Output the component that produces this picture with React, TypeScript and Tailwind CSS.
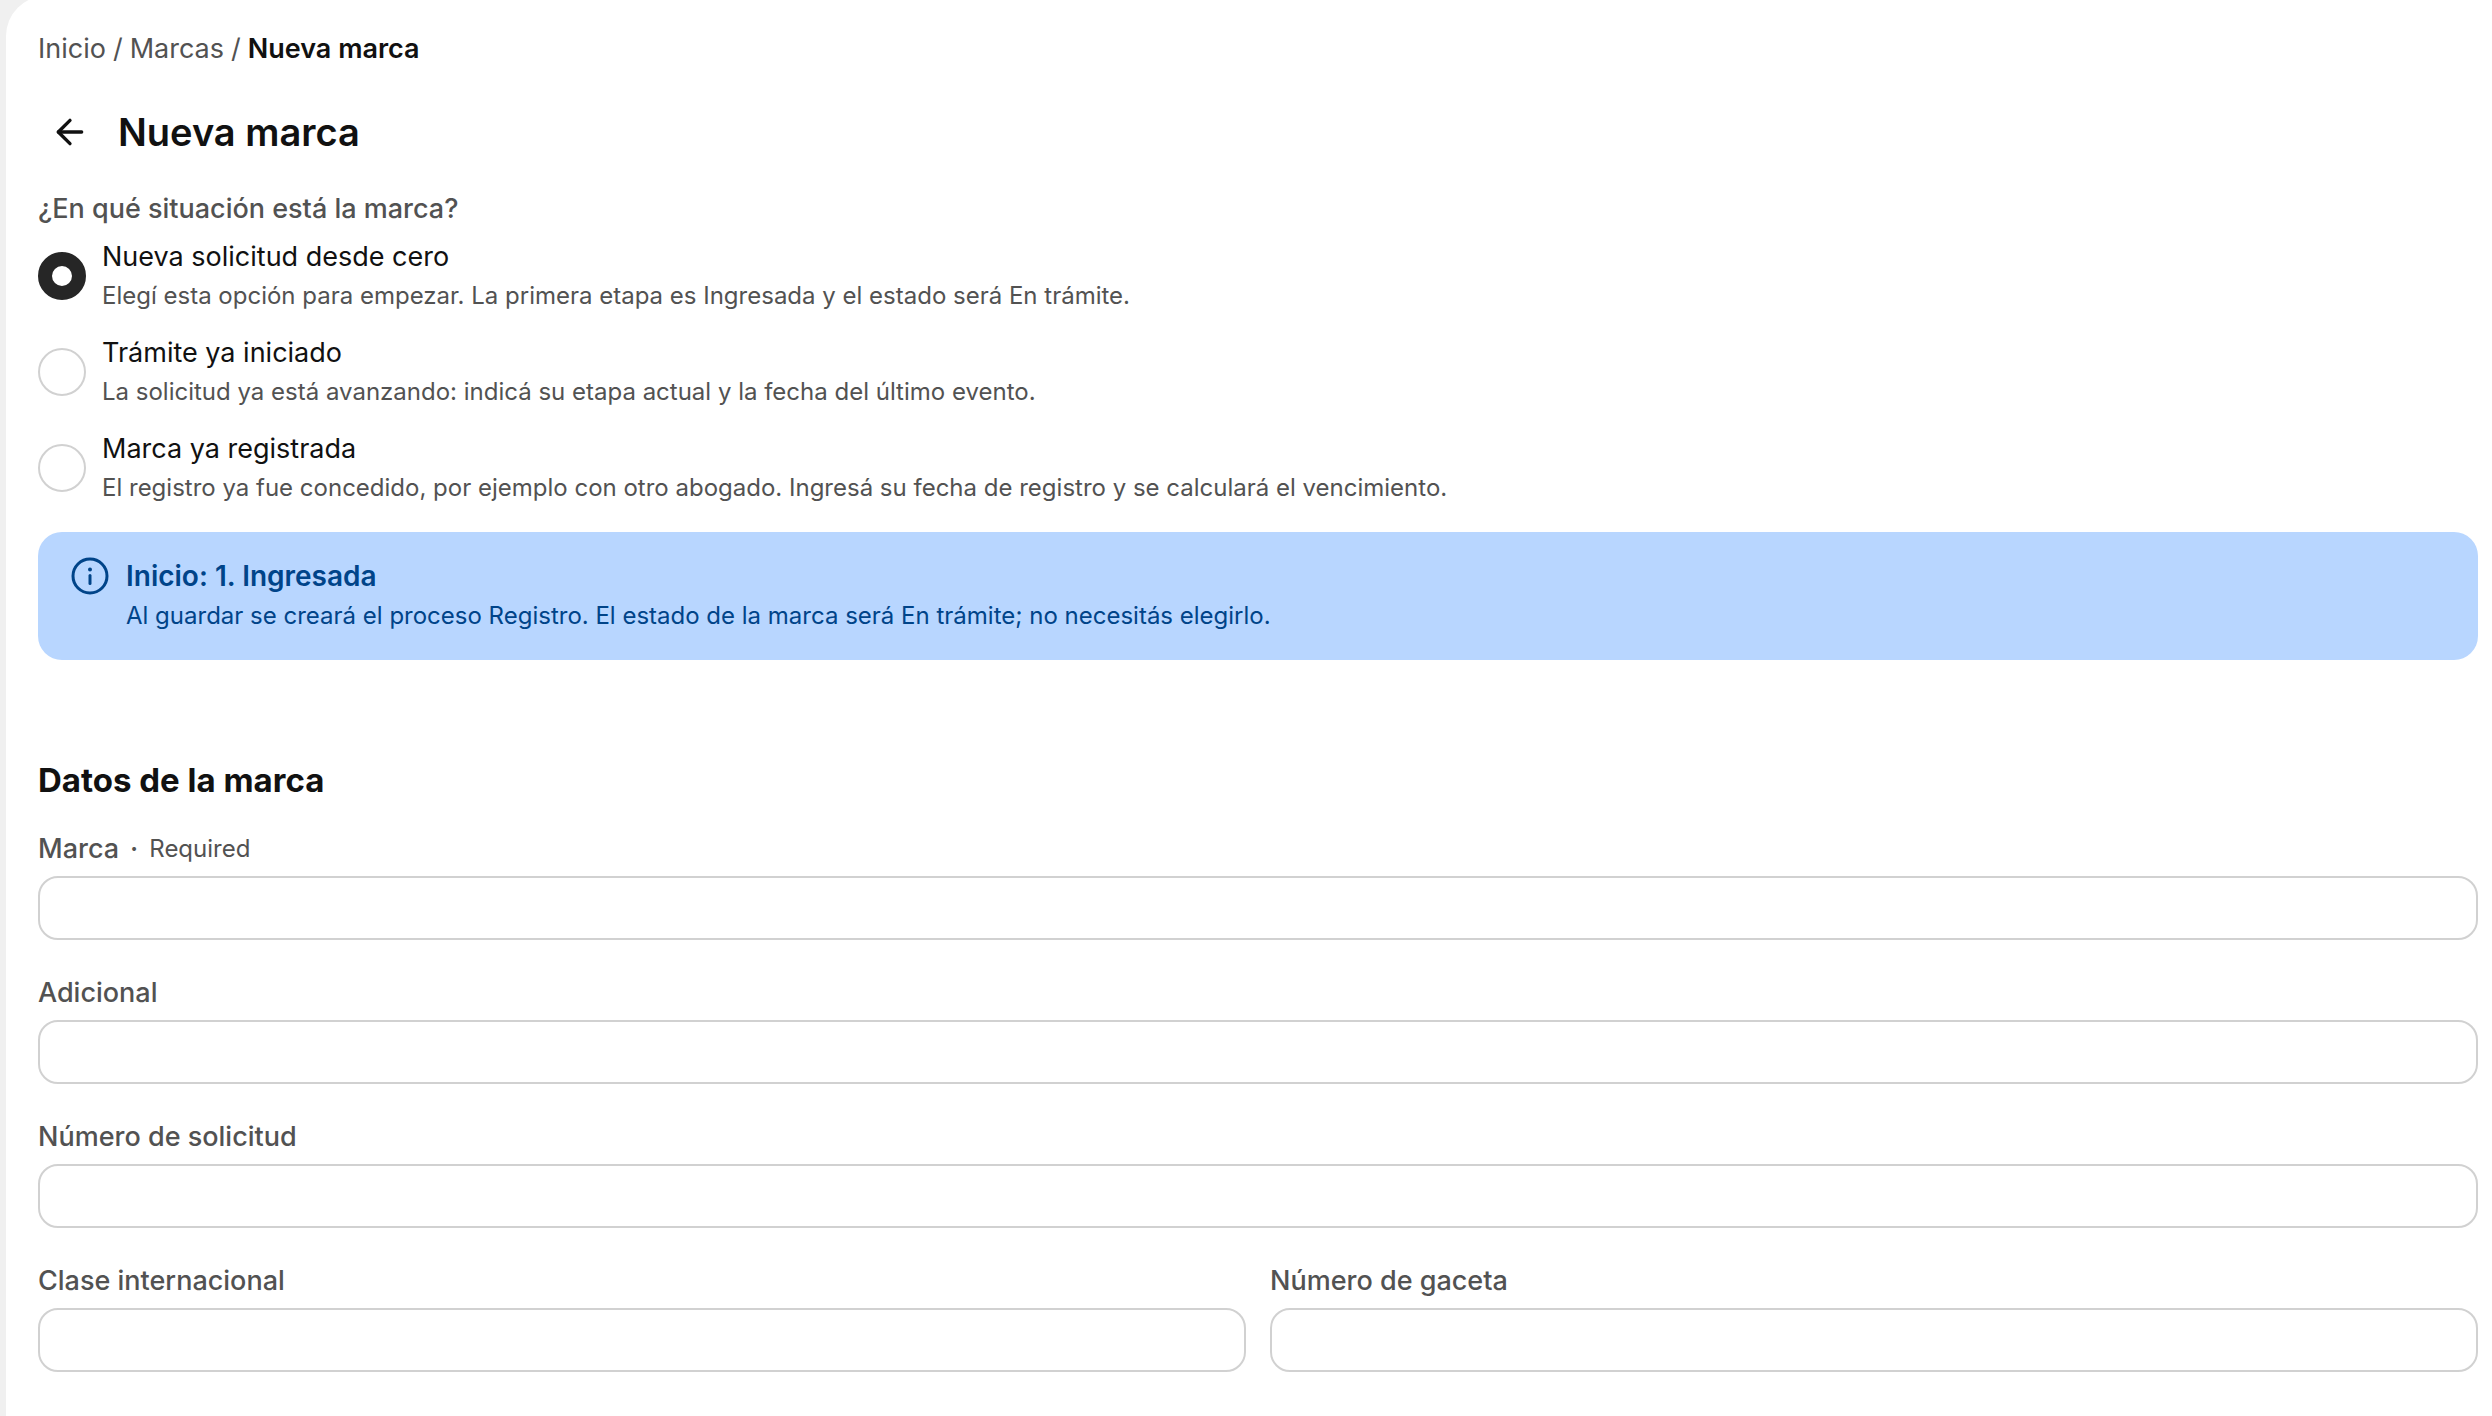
import { useState } from 'react';
import { ArrowLeft } from 'lucide-react';

const situations = [
  {
    value: 'new',
    title: 'Nueva solicitud desde cero',
    description: 'Elegí esta opción para empezar. La primera etapa es Ingresada y el estado será En trámite.',
  },
  {
    value: 'started',
    title: 'Trámite ya iniciado',
    description: 'La solicitud ya está avanzando: indicá su etapa actual y la fecha del último evento.',
  },
  {
    value: 'registered',
    title: 'Marca ya registrada',
    description:
      'El registro ya fue concedido, por ejemplo con otro abogado. Ingresá su fecha de registro y se calculará el vencimiento.',
  },
];

function InfoIcon() {
  return (
    <svg viewBox="0 0 48 48" className="w-12 h-12 shrink-0" fill="none" aria-hidden="true">
      <circle cx="24" cy="24" r="17" stroke="currentColor" strokeWidth="3" />
      <circle cx="24" cy="17.5" r="2" fill="currentColor" />
      <path d="M24 23.5v8" stroke="currentColor" strokeWidth="3" strokeLinecap="round" />
    </svg>
  );
}

function Field({ id, label, required }: { id: string; label: string; required?: boolean }) {
  return (
    <div className="flex flex-col gap-1.5">
      <label htmlFor={id} className="flex items-center gap-[11px] h-[42px] text-[27px] font-medium text-[#525252]">
        {label}
        {required && (
          <>
            <span>·</span>
            <span className="text-2xl font-normal">Required</span>
          </>
        )}
      </label>
      <input
        id={id}
        type="text"
        required={required}
        className="w-full h-16 px-5 text-[27px] bg-white border-2 border-[#d1d1d1] rounded-[20px] outline-none"
      />
    </div>
  );
}

export default function App() {
  const [situation, setSituation] = useState('new');

  return (
    <div className="min-h-screen flex flex-col bg-[#f0f0f0] pl-1.5 overflow-hidden font-['Inter',sans-serif] text-[#111111]">
      <main className="-mt-1 flex-1 bg-white rounded-tl-[40px] pl-8 pr-3.5 pt-8 pb-10">
        {/* Breadcrumbs */}
        <nav aria-label="Breadcrumb" className="h-[42px] flex items-center gap-[7px] text-[27px] text-[#525252]">
          <a href="#inicio">Inicio</a>
          <span>/</span>
          <a href="#marcas">Marcas</a>
          <span>/</span>
          <span className="font-semibold text-[#111111]">Nueva marca</span>
        </nav>

        {/* Title */}
        <header className="mt-[30px] flex items-center gap-4">
          <button type="button" aria-label="Volver" className="w-16 h-16 flex items-center justify-center">
            <ArrowLeft className="w-10 h-10" strokeWidth={2} />
          </button>
          <h1 className="text-[38px] leading-[48px] font-semibold">Nueva marca</h1>
        </header>

        <form>
          {/* Situation */}
          <fieldset className="mt-6">
            <legend className="text-[27px] leading-[42px] font-medium text-[#525252]">
              ¿En qué situación está la marca?
            </legend>
            <div className="mt-1.5 flex flex-col gap-4">
              {situations.map((s) => (
                <label key={s.value} className="flex items-center gap-4 h-20">
                  <input
                    type="radio"
                    name="situation"
                    value={s.value}
                    checked={situation === s.value}
                    onChange={() => setSituation(s.value)}
                    className="appearance-none w-12 h-12 shrink-0 rounded-full bg-white border-2 border-[#d1d1d1] checked:border-[14px] checked:border-[#262626]"
                  />
                  <span className="flex flex-col h-full">
                    <span className="text-[27px] leading-[42px]">{s.title}</span>
                    <span className="text-2xl leading-9 text-[#525252]">{s.description}</span>
                  </span>
                </label>
              ))}
            </div>
          </fieldset>

          {/* Info banner */}
          <div role="status" className="mt-6 h-32 flex gap-3 bg-[#b8d6ff] rounded-3xl px-7 py-5 text-[#004489]">
            <InfoIcon />
            <div>
              <p className="text-[28px] leading-[48px] font-semibold">Inicio: 1. Ingresada</p>
              <p className="text-2xl leading-8">
                Al guardar se creará el proceso Registro. El estado de la marca será En trámite; no necesitás elegirlo.
              </p>
            </div>
          </div>

          {/* Brand data */}
          <section className="mt-24">
            <h2 className="text-[33px] leading-[48px] font-bold">Datos de la marca</h2>
            <div className="mt-6 flex flex-col gap-8">
              <Field id="marca" label="Marca" required />
              <Field id="adicional" label="Adicional" />
              <Field id="solicitud" label="Número de solicitud" />
              <div className="grid grid-cols-2 gap-6">
                <Field id="clase" label="Clase internacional" />
                <Field id="gaceta" label="Número de gaceta" />
              </div>
            </div>
          </section>
        </form>
      </main>
    </div>
  );
}
